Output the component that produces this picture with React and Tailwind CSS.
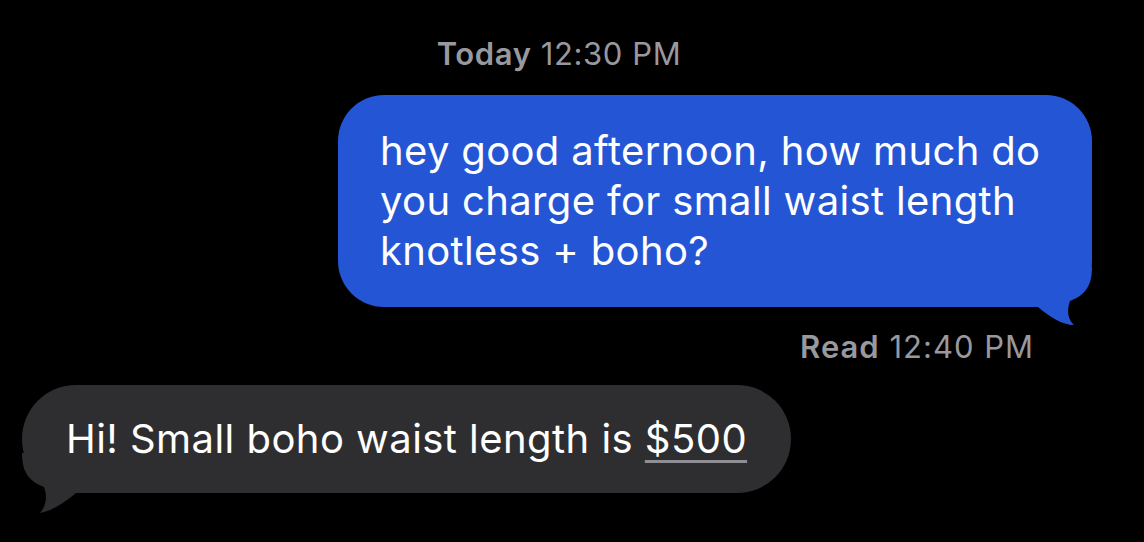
export default function App() {
    return (
        <div
            className="flex h-[542px] w-[1144px] flex-col overflow-hidden bg-black"
            style={{ fontFamily: "Inter, 'Liberation Sans', sans-serif" }}
        >
            <div className="mt-[34px] pr-[26px] text-center text-[31px] leading-[40px] tracking-[0.6px] text-[#98989f]">
                <span className="font-semibold">Today</span> 12:30 PM
            </div>

            <div className="relative mt-[21px] mr-[52px] self-end">
                <div className="relative z-10 w-[754px] rounded-[46px] bg-[#2455d5] px-[42px] pt-[31px] pb-[31px] text-[40px] leading-[50px] tracking-[0.35px] text-white">
                    <div className="whitespace-nowrap">hey good afternoon, how much do</div>
                    <div className="whitespace-nowrap">you charge for small waist length</div>
                    <div className="whitespace-nowrap">knotless + boho?</div>
                </div>
                <svg
                    className="absolute right-0 bottom-[-25px] z-0"
                    width="80"
                    height="65"
                    viewBox="0 0 80 65"
                >
                    <path
                        d="M80 0 C80 18 74 28 58 34 C55 42 55 52 62 58 C50 58 38 50 26 40 L0 40 L0 0 Z"
                        fill="#2455d5"
                    />
                </svg>
            </div>

            <div className="mt-[20px] mr-[110px] self-end text-[31px] leading-[40px] tracking-[1px] text-[#98989f]">
                <span className="font-semibold">Read</span> 12:40 PM
            </div>

            <div className="relative mt-[18px] ml-[22px] self-start">
                <div className="relative z-10 rounded-full bg-[#2e2e30] px-[44px] pt-[29px] pb-[29px] text-[40px] leading-[50px] tracking-[0.45px] whitespace-nowrap text-white">
                    Hi! Small boho waist length is{" "}
                    <span className="underline decoration-[#8e8e93] decoration-[3px] underline-offset-[7px]">
                        $500
                    </span>
                </div>
                <svg
                    className="absolute bottom-[-25px] left-0 z-0"
                    width="80"
                    height="65"
                    viewBox="0 0 80 65"
                >
                    <path
                        d="M0 0 C0 18 6 28 22 34 C25 42 25 52 18 60 C30 58 42 50 54 40 L80 40 L80 0 Z"
                        fill="#2e2e30"
                    />
                </svg>
            </div>
        </div>
    );
}
